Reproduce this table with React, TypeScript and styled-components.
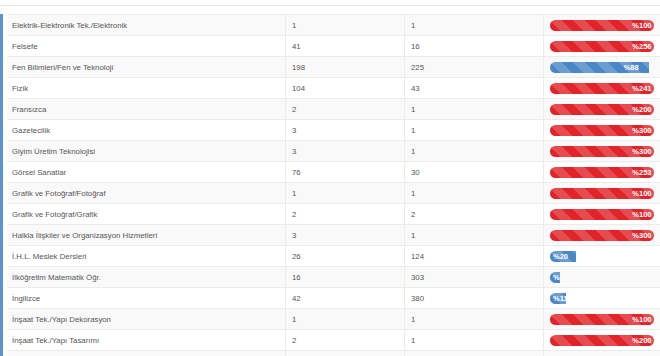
import React from "react";
import styled, { createGlobalStyle } from "styled-components";

type Row = { name: string; a: number; b: number };

const rows: Row[] = [
  { name: "Elektrik-Elektronik Tek./Elektronik", a: 1, b: 1 },
  { name: "Felsefe", a: 41, b: 16 },
  { name: "Fen Bilimleri/Fen ve Teknoloji", a: 198, b: 225 },
  { name: "Fizik", a: 104, b: 43 },
  { name: "Fransızca", a: 2, b: 1 },
  { name: "Gazetecilik", a: 3, b: 1 },
  { name: "Giyim Üretim Teknolojisi", a: 3, b: 1 },
  { name: "Görsel Sanatlar", a: 76, b: 30 },
  { name: "Grafik ve Fotoğraf/Fotoğraf", a: 1, b: 1 },
  { name: "Grafik ve Fotoğraf/Grafik", a: 2, b: 2 },
  { name: "Halkla İlişkiler ve Organizasyon Hizmetleri", a: 3, b: 1 },
  { name: "İ.H.L. Meslek Dersleri", a: 26, b: 124 },
  { name: "İlköğretim Matematik Öğr.", a: 16, b: 303 },
  { name: "İngilizce", a: 42, b: 380 },
  { name: "İnşaat Tek./Yapı Dekorasyon", a: 1, b: 1 },
  { name: "İnşaat Tek./Yapı Tasarımı", a: 2, b: 1 },
];

const GlobalStyle = createGlobalStyle`
  html, body {
    margin: 0;
    padding: 0;
    background: #fff;
    overflow: hidden;
    font-family: "Liberation Sans", Arial, sans-serif;
  }
`;

const App = () => {
  return (
    <>
      <GlobalStyle />
      <TopBar />
      <Panel>
        <Table>
          {rows.map((r, i) => {
            const pct = Math.floor((r.a / r.b) * 100);
            const over = pct >= 100;
            // bar length grows with the ratio, then the track clips it
            const w = 4.5 + Math.min(pct, 100) * 1.07;
            return (
              <Tr key={r.name} $odd={i % 2 === 0}>
                <Td $first>{r.name}</Td>
                <Td>{r.a}</Td>
                <Td>{r.b}</Td>
                <Td>
                  <Track>
                    <Fill $over={over} style={{ width: w }}>
                      <Label>%{pct}</Label>
                    </Fill>
                  </Track>
                </Td>
              </Tr>
            );
          })}
          <Tr $odd>
            <Td $first />
            <Td />
            <Td />
            <Td />
          </Tr>
        </Table>
      </Panel>
    </>
  );
};

export default App;

const TopBar = styled.div`
  height: 5px;
  border-bottom: 1px solid #e6e6e6;
  margin-bottom: 8px;
`;

const Panel = styled.div`
  border-left: 3px solid #5a95d3;
  padding-left: 4px;
`;

const Table = styled.div`
  display: flex;
  flex-direction: column;
`;

const Tr = styled.div<{ $odd?: boolean }>`
  display: grid;
  grid-template-columns: 278px 119px 139px 1fr;
  height: 21px;
  box-sizing: border-box;
  border-top: 1px solid #ececec;
  background: ${(p) => (p.$odd ? "#f9f9f9" : "#fff")};
`;

const Td = styled.div<{ $first?: boolean }>`
  display: flex;
  align-items: center;
  padding: 0 6px 0 ${(p) => (p.$first ? "5px" : "6px")};
  border-left: ${(p) => (p.$first ? "none" : "1px solid #ececec")};
  font-size: 7.8px;
  color: #555;
  white-space: nowrap;
  overflow: hidden;
`;

const Track = styled.div`
  width: 104px;
  height: 11px;
  border-radius: 6px;
  overflow: hidden;
  margin-top: 1px;
`;

const Fill = styled.div<{ $over: boolean }>`
  height: 100%;
  overflow: hidden;
  background-color: ${(p) => (p.$over ? "#e1232a" : "#4a87c6")};
  background-image: linear-gradient(
    45deg,
    rgba(255, 255, 255, 0.18) 25%,
    transparent 25%,
    transparent 50%,
    rgba(255, 255, 255, 0.18) 50%,
    rgba(255, 255, 255, 0.18) 75%,
    transparent 75%,
    transparent
  );
  background-size: 23px 23px;
`;

const Label = styled.span`
  display: block;
  padding: 0 10px 0 3px;
  text-align: right;
  white-space: nowrap;
  font-size: 7.5px;
  font-weight: bold;
  line-height: 11px;
  color: #fff;
`;
